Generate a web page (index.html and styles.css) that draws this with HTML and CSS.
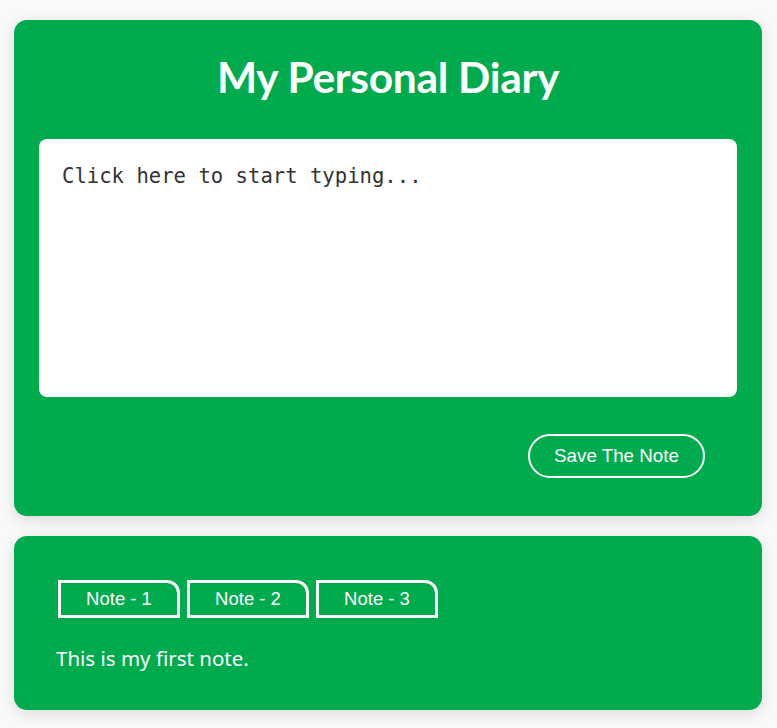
FILE: index.html
```html
<!DOCTYPE html>
<html>
<head>
<meta charset="utf-8">
<link rel="stylesheet" href="styles.css">
</head>
<body>
<div class="card editor">
  <h1 class="title">My Personal Diary</h1>
  <div class="pad">Click here to start typing...</div>
  <div class="actions">
    <button class="save">Save The Note</button>
  </div>
</div>
<div class="card notes">
  <div class="tabs">
    <button class="tab">Note - 1</button>
    <button class="tab">Note - 2</button>
    <button class="tab">Note - 3</button>
  </div>
  <p class="note-text">This is my first note.</p>
</div>
</body>
</html>
```
FILE: styles.css
```css
html, body { margin: 0; padding: 0; }
body {
  background: #f9f9f9;
  padding: 20px 15px 18px 14px;
  font-family: "Liberation Sans", Arial, sans-serif;
}
.card {
  background: #00ab4e;
  border-radius: 13px;
  box-shadow: 0 4px 16px rgba(0,0,0,0.12);
}
.editor {
  padding: 25px 25px 38px 25px;
}
.title {
  margin: 0;
  height: 94px;
  line-height: 64px;
  text-align: center;
  color: #fff;
  font-family: "Lato", sans-serif;
  font-weight: 700;
  font-size: 42.5px;
  letter-spacing: -0.3px;
}
.pad {
  background: #fff;
  border-radius: 8px;
  height: 258px;
  box-sizing: border-box;
  padding: 24px 23px;
  font-family: "DejaVu Sans Mono", monospace;
  font-size: 20.6px;
  line-height: 26px;
  color: #333;
}
.actions {
  display: flex;
  justify-content: flex-end;
  padding-right: 32px;
  margin-top: 37px;
}
.save {
  width: 177px;
  height: 44px;
  border: 2px solid #fff;
  border-radius: 22px;
  background: transparent;
  color: #fff;
  font-family: "Liberation Sans", Arial, sans-serif;
  font-size: 18.8px;
  padding: 0;
}
.notes {
  margin-top: 20px;
  padding: 44px 42px 38px 42px;
}
.tabs {
  display: flex;
  gap: 7px;
  padding-left: 2px;
}
.tab {
  width: 122px;
  height: 38px;
  box-sizing: border-box;
  border: 3px solid #fff;
  border-radius: 0 13px 0 0;
  background: transparent;
  color: #fff;
  font-family: "Liberation Sans", Arial, sans-serif;
  font-size: 18.5px;
  padding: 0;
}
.note-text {
  margin: 26px 0 0 0;
  color: #fff;
  font-family: "Comic Sans MS", "Noto Sans", sans-serif;
  font-size: 20.5px;
  line-height: 28px;
}
```
